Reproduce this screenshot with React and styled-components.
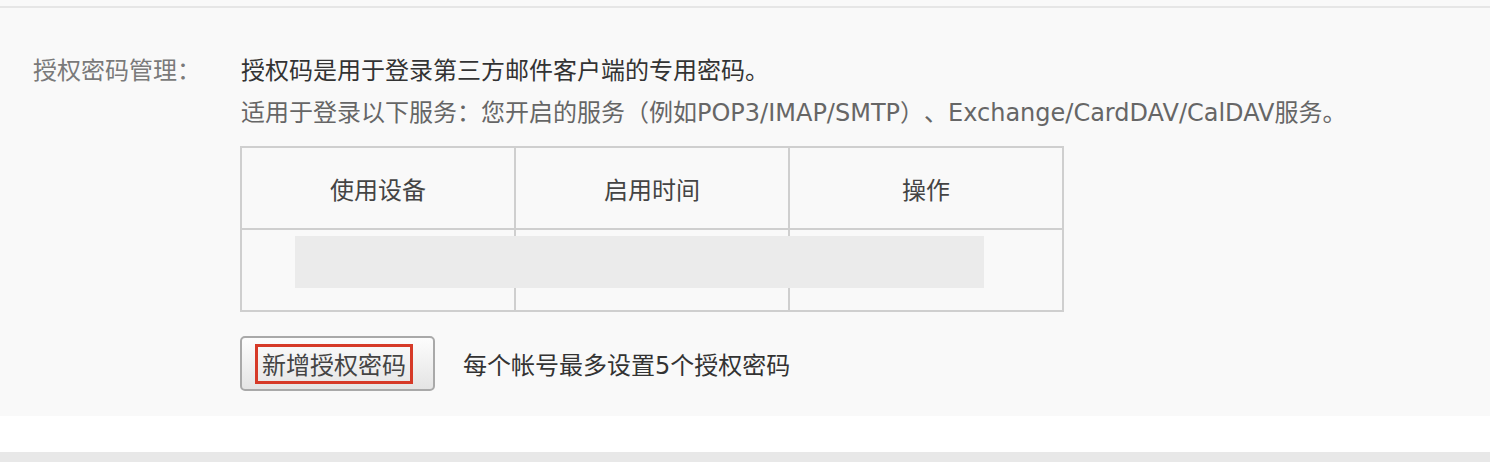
import React from "react";
import styled, { createGlobalStyle } from "styled-components";

const GlobalStyle = createGlobalStyle`
  html, body { margin: 0; padding: 0; background: #ffffff; }
  body {
    font-family: "DejaVu Sans", "Noto Sans CJK SC", sans-serif;
    -webkit-font-smoothing: antialiased;
    text-spacing-trim: space-all;
  }
`;

const Page = styled.div`
  width: 1490px;
  height: 462px;
  background: #ffffff;
  display: flex;
  flex-direction: column;
  overflow: hidden;
`;

const TopStrip = styled.div`
  height: 6px;
  background: #f9f9f9;
  border-bottom: 2px solid #e6e6e6;
`;

const Panel = styled.section`
  background: #f9f9f9;
  display: flex;
  padding: 42px 0 25px 33px;
`;

const Label = styled.div`
  width: 207px;
  flex: none;
  font-size: 24px;
  line-height: 42px;
  color: #7a7a7a;
`;

const Content = styled.div`
  display: flex;
  flex-direction: column;
`;

const Line = styled.p`
  margin: 0 0 0 1px;
  font-size: 24px;
  line-height: 42px;
  color: ${(p) => p.$color || "#333"};
  white-space: nowrap;
  text-spacing-trim: space-all;
`;

const TableWrap = styled.div`
  position: relative;
  margin-top: 12px;
  width: 824px;
`;

const Table = styled.div`
  display: grid;
  grid-template-columns: repeat(3, 272px);
  grid-auto-rows: 80px;
  gap: 2px;
  padding: 2px;
  background: #cfcfcf;
`;

const Cell = styled.div`
  background: #f9f9f9;
  display: flex;
  align-items: center;
  justify-content: center;
  font-size: 24px;
  color: #444;
`;

const Redaction = styled.div`
  position: absolute;
  left: 55px;
  top: 90px;
  width: 689px;
  height: 52px;
  background: #ebebeb;
`;

const ActionRow = styled.div`
  display: flex;
  align-items: center;
  margin-top: 24px;
  gap: 28px;
`;

const Button = styled.button`
  width: 195px;
  height: 55px;
  box-sizing: border-box;
  border: 2px solid #a9a9a9;
  border-radius: 5px;
  background: linear-gradient(#fdfdfd, #e4e4e4);
  padding: 0 0 0 13px;
  display: flex;
  align-items: center;
  font-family: inherit;
  cursor: pointer;
`;

const Highlight = styled.span`
  box-sizing: border-box;
  width: 158px;
  height: 40px;
  border: 3px solid #d63a28;
  display: flex;
  align-items: center;
  justify-content: center;
  font-size: 24px;
  color: #444;
`;

const Note = styled.span`
  font-size: 24px;
  color: #333;
`;

const Gap = styled.div`
  height: 36px;
  background: #ffffff;
`;

const BottomBar = styled.div`
  flex: 1;
  background: #e8e8e8;
`;

export default function App() {
  return (
    <>
      <GlobalStyle />
      <Page>
        <TopStrip />
        <Panel>
          <Label>授权密码管理：</Label>
          <Content>
            <Line>授权码是用于登录第三方邮件客户端的专用密码。</Line>
            <Line $color="#666">
              适用于登录以下服务：您开启的服务（例如POP3/IMAP/SMTP）、Exchange/CardDAV/CalDAV服务。
            </Line>
            <TableWrap>
              <Table>
                <Cell>使用设备</Cell>
                <Cell>启用时间</Cell>
                <Cell>操作</Cell>
                <Cell />
                <Cell />
                <Cell />
              </Table>
              <Redaction />
            </TableWrap>
            <ActionRow>
              <Button type="button">
                <Highlight>新增授权密码</Highlight>
              </Button>
              <Note>每个帐号最多设置5个授权密码</Note>
            </ActionRow>
          </Content>
        </Panel>
        <Gap />
        <BottomBar />
      </Page>
    </>
  );
}
